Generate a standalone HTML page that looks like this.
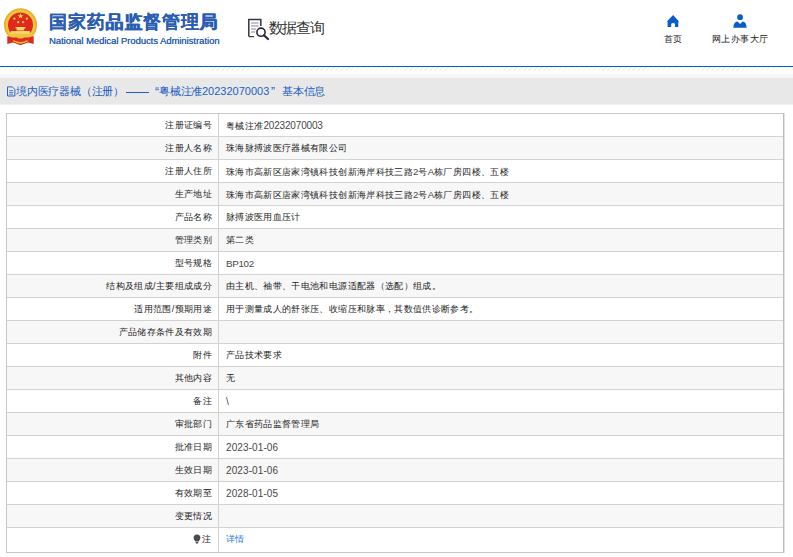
<!DOCTYPE html>
<html><head><meta charset="utf-8">
<style>
*{margin:0;padding:0;box-sizing:border-box}
html,body{width:793px;height:557px;overflow:hidden;background:#fff;font-family:"Liberation Sans",sans-serif}
.a{position:absolute;white-space:nowrap}
.c{font-size:9px;letter-spacing:.35px}
.d{font-size:10px;letter-spacing:-.17px}
.dt{letter-spacing:.1px}
.v.d{top:0}
span.d{position:relative;top:0}
.t1{left:49px;top:10px;font-size:18px;font-weight:700;color:#2a5cb2;text-shadow:.35px 0 0 #2a5cb2;letter-spacing:.8px;line-height:24px}
.t2{left:49px;top:35px;font-size:9.4px;color:#2d62b4;line-height:12px;text-shadow:.2px 0 0 #2d62b4}
.sqt{left:268.5px;top:18px;font-size:15px;color:#333;letter-spacing:-1.1px;line-height:20px}
.nav{top:33px;color:#222;line-height:12px;font-weight:400!important;letter-spacing:.55px!important}
.bl{left:0;top:66px;width:793px;height:1px;background:#0b5cc2}
.hatch{left:0;top:67px;width:793px;height:3.5px;background:repeating-linear-gradient(135deg,#fff 0 1.5px,#f1f1f1 1.5px 2.5px,#fff 2.5px 3.5px)}
.grad{left:0;top:71px;width:793px;height:7px;background:linear-gradient(#fff,#f3f3f3)}
.band{left:0;top:78px;width:793px;height:26px;background:#e8e8e8}
.band2{left:0;top:104px;width:793px;height:1px;background:#f0f2f8}
.crumb{top:84px;color:#1a5cc2;line-height:14px;font-size:11px;font-weight:400}
.tbl{position:absolute;left:6px;top:113px;width:778px;height:440px;border:1px solid #c8c8cc;border-right-color:#bcbcc4;box-shadow:1px 0 0 #e2e2e8}
.r{height:23px;border-bottom:1px solid #d2d2d2;position:relative;color:#333;font-size:9px}
.c{font-weight:400}
.r .c{color:#1c1c1c}
.r .d{color:#484848}
.sm{font-size:9.6px;letter-spacing:0;top:-.5px!important}
.r:last-child{border-bottom:none;height:24px}
.r:nth-child(even){background:#f7f7f7}
.l{position:absolute;left:0;top:0;width:212px;height:23px;border-right:1px solid #d2d2d2;text-align:right;padding-right:6px;line-height:23px}
.r:last-child .l{height:24px}
.v{position:absolute;left:219px;top:0;line-height:23px;white-space:nowrap}
.l span,.v span{display:inline-block}
</style></head><body>
<svg class="a" style="left:0;top:0" width="44" height="50" viewBox="0 0 44 50">
  <circle cx="20.5" cy="24.9" r="16.6" fill="#e9b02f"/>
  <circle cx="20.5" cy="24.9" r="14.8" fill="#f3c640"/>
  <circle cx="20.5" cy="24.9" r="12.5" fill="#e2281c"/>
  <polygon points="20.5,13.1 21.3,15.2 23.5,15.2 21.7,16.5 22.4,18.6 20.5,17.3 18.6,18.6 19.3,16.5 17.5,15.2 19.7,15.2" fill="#f7d64a"/>
  <circle cx="14.4" cy="18.7" r="1.15" fill="#f7d64a"/>
  <circle cx="26.9" cy="18.7" r="1.15" fill="#f7d64a"/>
  <circle cx="18.2" cy="22.2" r="1.15" fill="#f7d64a"/>
  <circle cx="23.1" cy="22.2" r="1.15" fill="#f7d64a"/>
  <path d="M15.6 27.1 h9.8 v1.5 h-9.8z M16.7 28.6 h7.5 v2 h-7.5z M10.7 30.9 h19.2 v3 h-19.2z" fill="#f6d66a"/>
  <path d="M8.5 33.9 h24 v3.5 h-24z" fill="#f0c23e"/>
  <path d="M7.3 36 L12 37.6 L29 37.6 L33.7 36 L33.7 44 L28 42.6 L20.5 45.2 L13 42.6 L7.3 44Z" fill="#de2a1e"/>
  <ellipse cx="20.5" cy="36.9" rx="3.4" ry="1.7" fill="#f3c640"/>
  <path d="M13.3 40 Q20.5 44.2 27.6 40 L27.6 41.6 Q20.5 45.8 13.3 41.6Z" fill="#f0c23e"/>
</svg>
<div class="a t1">国家药品监督管理局</div>
<div class="a t2">National Medical Products Administration</div>
<svg class="a" style="left:246px;top:17px" width="24" height="24" viewBox="0 0 24 24">
  <path d="M2.8 19.6 V2.6 H14.8 V9" fill="none" stroke="#34344a" stroke-width="1.5"/>
  <path d="M2.8 19.6 H8" fill="none" stroke="#34344a" stroke-width="1.2"/>
  <path d="M5 6 h7.5 M5 9 h7.5 M5 12 h5 M5 15 h4" stroke="#8a8a96" stroke-width="1.1"/>
  <circle cx="15" cy="15.2" r="4.1" fill="none" stroke="#2a2a3c" stroke-width="1.6"/>
  <path d="M17.9 18.2 L22 22" stroke="#2a2a3c" stroke-width="2.2" stroke-linecap="round"/>
</svg>
<div class="a sqt">数据查询</div>
<svg class="a" style="left:664px;top:13px" width="18" height="16" viewBox="0 0 18 16">
  <path d="M9.1 2.1 L2.8 8.4 L3.6 8.4 L3.6 13.9 L7.2 13.9 L7.2 10.8 Q9.1 9.2 11 10.8 L11 13.9 L14.3 13.9 L14.3 8.4 L15.1 8.4Z" fill="#0a5cc8"/>
</svg>
<svg class="a" style="left:731px;top:12px" width="18" height="18" viewBox="0 0 18 18">
  <circle cx="9.1" cy="5.2" r="2.9" fill="#0a5cc8"/>
  <path d="M2.3 15.8 Q2.6 9.8 6.6 9.4 L9.1 12 L11.6 9.4 Q15.5 9.8 15.6 15.8Z" fill="#0a5cc8"/>
</svg>
<div class="a nav c" style="left:663.5px">首页</div>
<div class="a nav c" style="left:711.5px">网上办事大厅</div>
<div class="a bl"></div>
<div class="a hatch"></div>
<div class="a grad"></div>
<div class="a band"></div>
<div class="a band2"></div>
<svg class="a" style="left:6px;top:86px" width="10" height="11" viewBox="0 0 10 11">
  <path d="M1.5 .9 H6.3 L8.9 3.5 V10 H1.5Z" fill="none" stroke="#2a62c0" stroke-width="1"/>
  <path d="M3.2 4.6 h3.9 M3.2 6.4 h3.9 M3.2 8.2 h3.9" stroke="#2a62c0" stroke-width=".8"/>
</svg>
<div class="a crumb" style="left:16px;letter-spacing:-.2px">境内医疗器械（注册）</div>
<div class="a" style="left:126px;top:92px;width:23px;height:1px;background:#1d5fc4"></div>
<div class="a crumb" style="left:155px;font-size:12px;top:85px;font-weight:400">“</div>
<div class="a crumb" style="left:159px;letter-spacing:-.2px">粤械注准</div>
<div class="a crumb" style="left:202px;font-size:11px;font-weight:400;color:#1d5fc4;text-shadow:none">20232070003</div>
<div class="a crumb" style="left:271px;font-size:12px;top:85px;font-weight:400">”</div>
<div class="a crumb" style="left:282px;letter-spacing:-.2px">基本信息</div>
<div class="tbl">
  <div class="r"><div class="l c">注册证编号</div><div class="v"><span class="c">粤械注准</span><span class="d">20232070003</span></div></div>
  <div class="r"><div class="l c">注册人名称</div><div class="v c">珠海脉搏波医疗器械有限公司</div></div>
  <div class="r"><div class="l c">注册人住所</div><div class="v"><span class="c">珠海市高新区唐家湾镇科技创新海岸科技三路</span><span class="d sm">2</span><span class="c">号</span><span class="d sm">A</span><span class="c">栋厂房四楼、五楼</span></div></div>
  <div class="r"><div class="l c">生产地址</div><div class="v"><span class="c">珠海市高新区唐家湾镇科技创新海岸科技三路</span><span class="d sm">2</span><span class="c">号</span><span class="d sm">A</span><span class="c">栋厂房四楼、五楼</span></div></div>
  <div class="r"><div class="l c">产品名称</div><div class="v c">脉搏波医用血压计</div></div>
  <div class="r"><div class="l c">管理类别</div><div class="v c">第二类</div></div>
  <div class="r"><div class="l c">型号规格</div><div class="v d" style="font-size:9.8px;letter-spacing:-.3px">BP102</div></div>
  <div class="r"><div class="l c">结构及组成/主要组成成分</div><div class="v c">由主机、袖带、干电池和电源适配器（选配）组成。</div></div>
  <div class="r"><div class="l c">适用范围/预期用途</div><div class="v c">用于测量成人的舒张压、收缩压和脉率，其数值供诊断参考。</div></div>
  <div class="r"><div class="l c">产品储存条件及有效期</div><div class="v"></div></div>
  <div class="r"><div class="l c">附件</div><div class="v c">产品技术要求</div></div>
  <div class="r"><div class="l c">其他内容</div><div class="v c">无</div></div>
  <div class="r"><div class="l c">备注</div><div class="v d">\</div></div>
  <div class="r"><div class="l c">审批部门</div><div class="v c">广东省药品监督管理局</div></div>
  <div class="r"><div class="l c">批准日期</div><div class="v d dt">2023-01-06</div></div>
  <div class="r"><div class="l c">生效日期</div><div class="v d dt">2023-01-06</div></div>
  <div class="r"><div class="l c">有效期至</div><div class="v d dt">2028-01-05</div></div>
  <div class="r"><div class="l c">变更情况</div><div class="v"></div></div>
  <div class="r"><div class="l c" style="padding-right:7px"><svg width="8" height="10" viewBox="0 0 8 10" style="vertical-align:-1.5px;margin-right:1px"><path d="M4 .6 C6.3 .6 7.4 2.2 7.4 3.9 C7.4 5.5 6 6.3 5.7 7.4 H2.3 C2 6.3 .6 5.5 .6 3.9 C.6 2.2 1.7 .6 4 .6Z M2.6 8 H5.4 L5 9.4 H3Z" fill="#4a4a55"/></svg>注</div><div class="v c" style="color:#1c76ec!important">详情</div></div>
</div>
</body></html>
